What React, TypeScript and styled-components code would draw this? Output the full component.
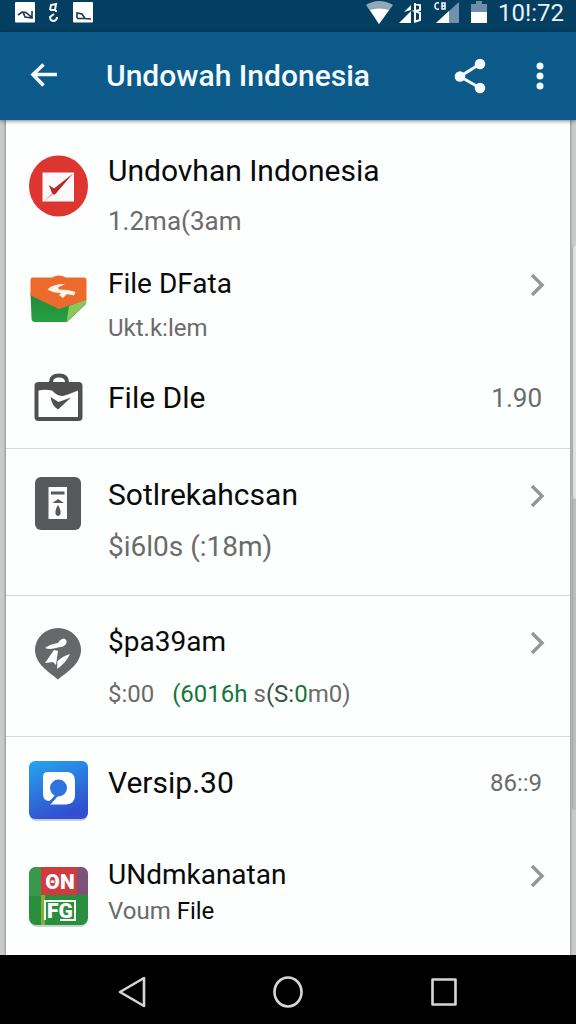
import React from "react";
import styled, { createGlobalStyle } from "styled-components";

const GlobalStyle = createGlobalStyle`
  * { box-sizing: border-box; }
  body { margin: 0; background: #000; font-family: Roboto, "Noto Sans", sans-serif; }
  button { border: 0; padding: 0; background: none; color: inherit; font: inherit; cursor: pointer; }
  svg { display: block; }
`;

const Screen = styled.div`
  display: flex;
  flex-direction: column;
  min-height: 100vh;
`;

const StatusBar = styled.div`
  display: flex;
  align-items: center;
  justify-content: space-between;
  height: 32px;
  padding: 0 12px 6px 14px;
  background: #043e60;
  color: #e6f2f8;
`;

const StatusGroup = styled.div`
  display: flex;
  align-items: center;
  gap: 10px;
`;

const Clock = styled.time`
  font-size: 24px;
  line-height: 26px;
`;

const AppBar = styled.header`
  position: relative;
  z-index: 1;
  display: flex;
  align-items: center;
  gap: 12px;
  height: 88px;
  padding: 0 8px 0 20px;
  background: #0c5a8a;
  color: #f4fbff;
  box-shadow: 0 1px 4px rgba(0, 0, 0, 0.5);
`;

const BarButton = styled.button<{ $width: number }>`
  display: flex;
  align-items: center;
  justify-content: center;
  width: ${(p) => p.$width}px;
  height: 48px;
`;

const BarTitle = styled.h1`
  flex: 1;
  margin: 0;
  padding-left: 26px;
  font-size: 30px;
  line-height: 36px;
  font-weight: 500;
  white-space: nowrap;
`;

const Backdrop = styled.main`
  position: relative;
  flex: 1;
  display: flex;
  flex-direction: column;
  padding: 0 6px;
  background: #cbcbcd;
`;

const EdgePanel = styled.div<{ $top: number; $height: number; $lower?: boolean }>`
  position: absolute;
  right: 0;
  top: ${(p) => p.$top}px;
  width: 4px;
  height: ${(p) => p.$height}px;
  border-left: 1px solid #a9a9ab;
  border-radius: ${(p) => (p.$lower ? "0 0 0 4px" : "4px 0 0 4px")};
  background: ${(p) => (p.$lower ? "#bcbcbe" : "#e2e2e3")};
`;

const Card = styled.div`
  position: relative;
  flex: 1;
  background: #fdfefe;
  box-shadow: 0 0 3px rgba(0, 0, 0, 0.5);
`;

const Section = styled.section<{ $first?: boolean }>`
  padding: ${(p) => (p.$first ? 25 : 20)}px 24px 0 22px;
  & + & {
    border-top: 1px solid #d8dadd;
  }
`;

const Row = styled.div<{ $height: number }>`
  display: flex;
  gap: 20px;
  min-height: ${(p) => p.$height}px;
`;

const RowIcon = styled.svg`
  flex: none;
  width: 60px;
  height: 80px;
  margin-bottom: -8px;
  overflow: visible;
`;

const RowBody = styled.div<{ $gap: number }>`
  flex: 1;
  display: flex;
  flex-direction: column;
  gap: ${(p) => p.$gap}px;
  padding-top: 8px;
`;

const TitleLine = styled.div`
  display: flex;
  align-items: center;
  justify-content: space-between;
  height: 36px;
`;

const Title = styled.h2<{ $small?: boolean }>`
  margin: 0;
  font-size: ${(p) => (p.$small ? 28 : 30)}px;
  line-height: 36px;
  font-weight: 400;
  color: #0a0a0a;
`;

const Detail = styled.p<{ $size: number }>`
  margin: 0;
  font-size: ${(p) => p.$size}px;
  line-height: 32px;
  color: #6b6b6b;
  white-space: pre;
`;

const Accent = styled.span<{ $color: string }>`
  color: ${(p) => p.$color};
`;

const Value = styled.span<{ $size: number }>`
  padding-right: 4px;
  font-size: ${(p) => p.$size}px;
  line-height: 32px;
  color: #6b6b6b;
`;

const NavBar = styled.nav`
  display: flex;
  align-items: center;
  justify-content: space-around;
  height: 69px;
  padding: 4px 54px 0;
  background: #000;
  color: #d6d6d6;
`;

const NavButton = styled.button`
  display: flex;
  align-items: center;
  justify-content: center;
  width: 64px;
  height: 48px;
`;

const Chevron = () => (
  <button aria-label="Open">
    <svg width="18" height="26" viewBox="0 0 18 26" fill="none" stroke="#969696" strokeWidth="3.400">
      <path d="M4 4 L14 14 L4 24" />
    </svg>
  </button>
);

const CheckIcon = () => (
  <RowIcon viewBox="0 0 60 80">
    <ellipse cx="30.500" cy="41" rx="29.500" ry="30.500" fill="#dd352f" />
    <rect x="14.500" y="27.500" width="31.500" height="29" fill="#fffafa" />
    <path d="M21 40 L26 43.500 L45 28.500 L27 49.500 L24.500 49.500 Z" fill="#b8272a" />
    <path d="M16 56 L23.500 48 L26 49.500 Z" fill="#efb9b6" />
  </RowIcon>
);

const EnvelopeIcon = () => (
  <RowIcon viewBox="0 0 60 80">
    <defs>
      <linearGradient id="leaf" x1="0" y1="0" x2="0" y2="1">
        <stop offset="0" stopColor="#1f8a3d" />
        <stop offset="1" stopColor="#27a03f" />
      </linearGradient>
    </defs>
    <path d="M2.500 35 H58 V46 L39 64 H7 Q3.500 64 3.500 60 Z" fill="url(#leaf)" />
    <path d="M41 48 L58.500 41 L58.500 45 L38.500 64 Z" fill="#8bc75a" />
    <path d="M5 19.500 H24 Q31 15.500 38 19.500 H56 Q58.500 19.500 58.500 22 V42 L41 47.500 L31 51 L2.500 37.500 V22 Q2.500 19.500 5 19.500Z" fill="#eb6a2c" />
    <path d="M37 26 Q24 26 19.500 31.500 Q25 35 33 35 L31 37 L35 40 L39 36 L46 37.500 L47.500 34 L40 32 L31 31.500 L30 29.500 Z" fill="#fff4e8" />
  </RowIcon>
);

const BagIcon = () => (
  <RowIcon viewBox="0 0 60 80">
    <path d="M23 12 V10 Q23 3.500 31 3.500 Q39 3.500 39 10 V12" fill="none" stroke="#505050" strokeWidth="4" />
    <rect x="6.500" y="10" width="48" height="39" rx="4" fill="#505050" />
    <path d="M26 10 Q27 6 31 6 Q35 6 36 10Z" fill="#fdfefe" />
    <path d="M10.500 18.500 Q17 17 24 18.500 Q29 24 35 24 Q42 22 50 18.500 V45 H10.500 Z" fill="#fdfefe" />
    <path d="M22.500 25 L30.500 30 L43 25.500 L30 37.500 Q24 34 22.500 25Z" fill="#505050" />
  </RowIcon>
);

const StorageIcon = () => (
  <RowIcon viewBox="0 0 60 80">
    <rect x="7" y="8" width="46" height="53" rx="6" fill="#58595a" />
    <rect x="20.500" y="18" width="18.500" height="32" fill="#fcfcfc" />
    <rect x="23" y="22.500" width="13.500" height="3" fill="#58595a" />
    <path d="M24.500 34 L30 30 L36 34 Z M30 36 Q33 40 32.500 45 Q30 49 27.500 45 Q27 40 30 36Z" fill="#58595a" />
  </RowIcon>
);

const PinIcon = () => (
  <RowIcon viewBox="0 0 60 80">
    <path d="M30 63.500 C24 58 7 49 7 34 A23 22 0 0 1 53 34 C53 49 36 58 30 63.500Z" fill="#66686a" />
    <path d="M17 32 Q22 28 30 27 Q32 23 36 22.500 Q40 24 38 28 Q36 31 30 31.500 Q22 34 17 32Z M26 34 L30 35 L28 49 L25 46 L17 47 Z M42 38 Q38 47 29 53 L29.500 45 Q35 40 42 38Z" fill="#fff" />
  </RowIcon>
);

const VersionIcon = () => (
  <RowIcon viewBox="0 0 60 80">
    <defs>
      <linearGradient id="sky" x1="0" y1="0" x2="0.400" y2="1">
        <stop offset="0" stopColor="#25a5ee" />
        <stop offset="1" stopColor="#3150d0" />
      </linearGradient>
    </defs>
    <rect x="2" y="6" width="57" height="58" rx="6" fill="#c9cdd8" />
    <rect x="1" y="4" width="59" height="58" rx="6" fill="url(#sky)" />
    <path d="M20 15 H40 Q47 16 47 24 V38 Q47 47 38 47.500 H22 L26 41 L21 44 Q15 44 15 37 V20 Q15 15 20 15Z" fill="#fff" />
    <circle cx="30.500" cy="31" r="8.500" fill="#2e73df" />
    <path d="M21 45 L28 37 L30 39 L22.500 47.500Z" fill="#2e6ddb" />
  </RowIcon>
);

const MosaicLetters = styled.text`
  font-family: Roboto, sans-serif;
  font-size: 21px;
  font-weight: 900;
  fill: #fff;
  text-anchor: middle;
`;

const MosaicIcon = () => (
  <RowIcon viewBox="0 0 60 80">
    <defs>
      <clipPath id="tile">
        <rect x="1" y="18" width="59" height="58" rx="7" />
      </clipPath>
    </defs>
    <rect x="2" y="20" width="57" height="58" rx="7" fill="#c8d2ca" />
    <g clipPath="url(#tile)">
      <rect x="1" y="18" width="59" height="58" fill="#278f3d" />
      <rect x="1" y="18" width="12" height="29" fill="#36994b" />
      <rect x="13" y="18" width="36" height="28" fill="#d13b3e" />
      <rect x="49" y="18" width="11" height="28" fill="#7d5379" />
      <rect x="13" y="46" width="4" height="30" fill="#88ac36" />
    </g>
    <MosaicLetters x="32" y="40">ΘN</MosaicLetters>
    <path d="M17 71 V52 H47 V71 H32" fill="none" stroke="#f4faf3" strokeWidth="2" />
    <MosaicLetters x="32" y="69">FG</MosaicLetters>
  </RowIcon>
);

export default function App() {
  return (
    <Screen>
      <GlobalStyle />
      <StatusBar>
        <StatusGroup>
          <svg width="80" height="26" viewBox="14 0 80 26" aria-hidden="true">
            <rect x="15" y="2" width="20" height="20.500" rx="1" fill="#fff" />
            <path d="M18 15 L22 12 L26 12.500 L32 17.500 V11 M23 12 L25 17 L32 18" fill="none" stroke="#17394b" strokeWidth="1.600" />
            <path d="M50 10 L51 5 L56 4 L55 10 L50 10 M56 10 V12 M54 14 L50 17 Q50 21 54 21 Q57 20 57 17" fill="none" stroke="#f2f8fb" strokeWidth="2" />
            <rect x="73" y="2" width="20" height="20.500" rx="1" fill="#fff" />
            <path d="M77 18 V13 L82 14 L85 18.500 L91 19 M77 18.500 H85" fill="none" stroke="#17394b" strokeWidth="1.600" />
          </svg>
        </StatusGroup>
        <StatusGroup>
          <svg width="122" height="26" viewBox="364 0 122 26" aria-hidden="true">
            <path d="M364 5 Q377 -3 391 5 L377 24Z" fill="#8fa9ba" />
            <path d="M368 10 Q377 7 387 10 L377 24Z" fill="#fff" />
            <path d="M397 23 L409 11 V23Z M402 12 L409 5 V10Z" fill="#fff" />
            <path d="M413 3 V22 M412 4 L418 5 V10 L413 11 L418 13 V20 L412 22" fill="none" stroke="#fff" strokeWidth="2" />
            <path d="M437 3 Q433 2 433 6 Q433 10 437 9 M440 3 H443 V9 H440Z M440 6 H443" fill="none" stroke="#fff" strokeWidth="1.500" />
            <path d="M434 23 L457 2 V23Z" fill="#6f93ac" />
            <path d="M434 23 L447 11 V23Z" fill="#fff" />
            <path d="M469 4 H474 V1 H480 V4 H485 V12 H469Z" fill="#6f8ea4" />
            <rect x="469" y="12" width="16" height="11" fill="#fff" />
          </svg>
          <Clock>10!:72</Clock>
        </StatusGroup>
      </StatusBar>

      <AppBar>
        <BarButton $width={48} aria-label="Back">
          <svg width="28" height="26" viewBox="0 0 28 26" fill="none" stroke="currentColor" strokeWidth="3.600">
            <path d="M13.500 1.500 L3 11.500 L13.500 22.500 M3 11.500 H27" />
          </svg>
        </BarButton>
        <BarTitle>Undowah Indonesia</BarTitle>
        <BarButton $width={60} aria-label="Share">
          <svg width="32" height="36" viewBox="0 0 32 36" fill="currentColor">
            <path d="M26 6 L6 18.500 L26 30" fill="none" stroke="currentColor" strokeWidth="3" />
            <circle cx="26" cy="6" r="5.300" />
            <circle cx="6" cy="18.500" r="5.300" />
            <circle cx="26" cy="30" r="5.300" />
          </svg>
        </BarButton>
        <BarButton $width={56} aria-label="More options">
          <svg width="8" height="28" viewBox="0 0 8 28" fill="currentColor">
            <circle cx="4" cy="4" r="3.500" />
            <circle cx="4" cy="14" r="3.500" />
            <circle cx="4" cy="24" r="3.500" />
          </svg>
        </BarButton>
      </AppBar>

      <Backdrop>
        <EdgePanel $top={379} $height={311} $lower />
        <EdgePanel $top={125} $height={254} />
        <Card>
          <Section $first>
            <Row $height={113}>
              <CheckIcon />
              <RowBody $gap={16}>
                <TitleLine><Title>Undovhan Indonesia</Title></TitleLine>
                <Detail $size={26}>1.2ma(3am</Detail>
              </RowBody>
            </Row>
            <Row $height={114}>
              <EnvelopeIcon />
              <RowBody $gap={10}>
                <TitleLine><Title $small>File DFata</Title><Chevron /></TitleLine>
                <Detail $size={24}>Ukt.k:lem</Detail>
              </RowBody>
            </Row>
            <Row $height={76}>
              <BagIcon />
              <RowBody $gap={0}>
                <TitleLine><Title>File Dle</Title><Value $size={26}>1.90</Value></TitleLine>
              </RowBody>
            </Row>
          </Section>
          <Section>
            <Row $height={126}>
              <StorageIcon />
              <RowBody $gap={18}>
                <TitleLine><Title>Sotlrekahcsan</Title><Chevron /></TitleLine>
                <Detail $size={28}>$i6l0s (:18m)</Detail>
              </RowBody>
            </Row>
          </Section>
          <Section>
            <Row $height={120}>
              <PinIcon />
              <RowBody $gap={18}>
                <TitleLine><Title $small>$pa39am</Title><Chevron /></TitleLine>
                <Detail $size={24}>
                  $:00{"   "}<Accent $color="#17753a">(6016h</Accent> s<Accent $color="#3b5145">(S:</Accent><Accent $color="#17753a">0</Accent>m0)
                </Detail>
              </RowBody>
            </Row>
          </Section>
          <Section>
            <Row $height={92}>
              <VersionIcon />
              <RowBody $gap={0}>
                <TitleLine><Title>Versip.30</Title><Value $size={24}>86::9</Value></TitleLine>
              </RowBody>
            </Row>
            <Row $height={106}>
              <MosaicIcon />
              <RowBody $gap={2}>
                <TitleLine><Title $small>UNdmkanatan</Title><Chevron /></TitleLine>
                <Detail $size={24}>Voum <Accent $color="#0a0a0a">File</Accent></Detail>
              </RowBody>
            </Row>
          </Section>
        </Card>
      </Backdrop>

      <NavBar>
        <NavButton aria-label="Back">
          <svg width="28" height="32" viewBox="0 0 28 32" fill="none" stroke="currentColor" strokeWidth="2.600" strokeLinejoin="round">
            <path d="M26 2 V30 L2 16Z" />
          </svg>
        </NavButton>
        <NavButton aria-label="Home">
          <svg width="30" height="32" viewBox="0 0 30 32" fill="none" stroke="currentColor" strokeWidth="2.600">
            <ellipse cx="15" cy="16" rx="13.500" ry="14.500" />
          </svg>
        </NavButton>
        <NavButton aria-label="Recent apps">
          <svg width="26" height="28" viewBox="0 0 26 28" fill="none" stroke="currentColor" strokeWidth="2.600" strokeLinejoin="round">
            <rect x="1.500" y="1.500" width="23" height="25" />
          </svg>
        </NavButton>
      </NavBar>
    </Screen>
  );
}
